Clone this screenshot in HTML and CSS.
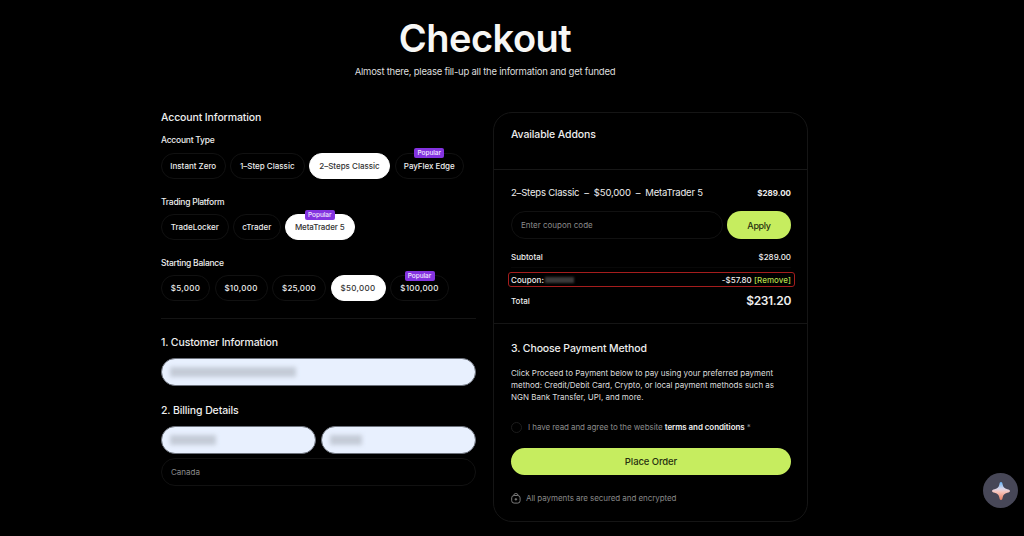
FILE: index.html
```
<!DOCTYPE html>
<html lang="en">
<head>
    <meta charset="UTF-8">
    <meta name="viewport" content="width=device-width, initial-scale=1.0">
    <title>Checkout</title>
    <link rel="stylesheet" href="styles.css">
</head>
<body>

    <header>
        <h1>Checkout</h1>
        <p>Almost there, please fill-up all the information and get funded</p>
    </header>

    <main class="checkout">
        <section class="details">
            <h2 class="account-title">Account Information</h2>

            <h3>Account Type</h3>
            <div class="options">
                <button class="pill w-instant">Instant Zero</button>
                <button class="pill w-one">1–Step Classic</button>
                <button class="pill w-two active">2–Steps Classic</button>
                <button class="pill w-edge">PayFlex Edge<span class="badge">Popular</span></button>
            </div>

            <h3>Trading Platform</h3>
            <div class="options">
                <button class="pill w-locker">TradeLocker</button>
                <button class="pill w-ctrader">cTrader</button>
                <button class="pill w-meta active">MetaTrader 5<span class="badge">Popular</span></button>
            </div>

            <h3>Starting Balance</h3>
            <div class="options balance">
                <button class="pill w-5k">$5,000</button>
                <button class="pill w-10k">$10,000</button>
                <button class="pill w-25k">$25,000</button>
                <button class="pill w-50k active">$50,000</button>
                <button class="pill w-100k">$100,000<span class="badge">Popular</span></button>
            </div>

            <h2 class="customer-title">1. Customer Information</h2>
            <div class="field filled"><span class="hidden-value email"></span></div>

            <h2 class="billing-title">2. Billing Details</h2>
            <div class="field-row">
                <div class="field filled"><span class="hidden-value first-name"></span></div>
                <div class="field filled"><span class="hidden-value last-name"></span></div>
            </div>
            <div class="field country">Canada</div>
        </section>

        <section class="summary">
            <div class="addons">
                <h2>Available Addons</h2>
            </div>

            <div class="order">
                <div class="line product">
                    <span class="product-name">2–Steps Classic &nbsp;–&nbsp; $50,000 &nbsp;–&nbsp; MetaTrader 5</span>
                    <strong>$289.00</strong>
                </div>
                <div class="coupon-form">
                    <div class="field coupon-input">Enter coupon code</div>
                    <button class="apply">Apply</button>
                </div>
                <div class="line subtotal">
                    <span>Subtotal</span>
                    <span>$289.00</span>
                </div>
                <div class="line coupon">
                    <span class="coupon-label">Coupon:<span class="hidden-code"></span></span>
                    <span>-$57.80 <a class="remove">[Remove]</a></span>
                </div>
                <div class="line total">
                    <span>Total</span>
                    <span class="amount">$231.20</span>
                </div>
            </div>

            <div class="payment">
                <h2>3. Choose Payment Method</h2>
                <p class="info">Click Proceed to Payment below to pay using your preferred payment<br>method: Credit/Debit Card, Crypto, or local payment methods such as<br>NGN Bank Transfer, UPI, and more.</p>
                <div class="terms">
                    <span class="check"></span>
                    <span>I have read and agree to the website <b>terms and conditions</b> *</span>
                </div>
                <button class="place-order">Place Order</button>
                <div class="secure">
                    <svg width="10" height="11" viewBox="0 0 10 11" fill="none" stroke="currentColor" stroke-width="0.9">
                        <rect x="0.7" y="2.5" width="8.4" height="7.6" rx="2.4"/>
                        <path d="M2.8 2.5V2.2a2.1 1.7 0 0 1 4.2 0v.3"/>
                        <path d="M4.9 5v2.6M3.6 6.3h2.6"/>
                    </svg>
                    <span>All payments are secured and encrypted</span>
                </div>
            </div>
        </section>
    </main>

    <button class="assistant" aria-label="Assistant">
        <svg width="20" height="20" viewBox="0 0 20 20">
            <defs>
                <linearGradient id="spark" x1="0" y1="0" x2="0" y2="1">
                    <stop offset="0" stop-color="#68b4f5"/>
                    <stop offset="0.38" stop-color="#dcd6e8"/>
                    <stop offset="0.55" stop-color="#f7c5bd"/>
                    <stop offset="1" stop-color="#e87e60"/>
                </linearGradient>
            </defs>
            <path fill="url(#spark)" d="M10 1c1 0 1.3.7 1.6 2.2.6 3 1.7 4.3 4.8 5C18.2 8.6 19 9.1 19 10s-.8 1.4-2.6 1.8c-3.1.7-4.2 2-4.8 5C11.3 18.3 11 19 10 19s-1.3-.7-1.6-2.2c-.6-3-1.7-4.3-4.8-5C1.8 11.400 1 10.9 1 10s.8-1.4 2.6-1.8c3.1-.7 4.2-2 4.8-5C8.7 1.7 9 1 10 1z"/>
        </svg>
    </button>

</body>
</html>
```
FILE: styles.css
```
* {
    box-sizing: border-box;
}
body {
    margin: 0;
    height: 536px;
    overflow: hidden;
    background-color: #000;
    color: #eee;
    font-family: 'Inter', sans-serif;
    font-size: 8px;
}
h1, h2, h3, p {
    margin: 0;
}
button {
    border: 0;
    padding: 0;
    font-family: inherit;
}
header {
    width: 970px;
    height: 112px;
    padding-top: 15px;
    text-align: center;
}
h1 {
    font-size: 38px;
    line-height: 46px;
    font-weight: 600;
    color: #f7f7f5;
    letter-spacing: -0.5px;
}
header p {
    margin-top: 4px;
    font-size: 9.5px;
    line-height: 13px;
    letter-spacing: -0.23px;
    color: #ddd;
}
h2 {
    font-size: 10.5px;
    line-height: 14px;
    font-weight: 500;
    letter-spacing: -0.12px;
}
h3 {
    font-size: 8.5px;
    line-height: 12px;
    font-weight: 500;
    letter-spacing: -0.25px;
}
.checkout {
    display: flex;
    gap: 17px;
    width: 647px;
    margin-left: 161px;
}

/* Left column */
.details {
    width: 315px;
}
.account-title {
    margin-top: -1.5px;
    margin-bottom: 9.5px;
}
.options {
    display: flex;
    gap: 4.5px;
    height: 26px;
    margin: 6.5px 0 17px;
}
.pill {
    position: relative;
    height: 26px;
    border: 1px solid #111;
    border-radius: 13px;
    background-color: #000;
    color: #eee;
    font-size: 8px;
    font-weight: 500;
    white-space: nowrap;
}
.pill.active {
    background-color: #fff;
    border-color: #fff;
    color: #333;
}
.w-instant { width: 64.5px; }
.w-one { width: 74.5px; }
.w-two { width: 81px; }
.w-edge { width: 69.5px; letter-spacing: -0.05px; }
.w-locker { width: 67.5px; }
.w-ctrader { width: 47.5px; }
.w-meta { width: 69.5px; letter-spacing: -0.1px; }
.w-5k { width: 49px; letter-spacing: 0.3px; }
.w-10k { width: 53px; letter-spacing: 0.3px; }
.w-25k { width: 54px; letter-spacing: 0.2px; }
.w-50k { width: 55px; letter-spacing: 0.3px; }
.w-100k { width: 59px; letter-spacing: 0.25px; }
.badge {
    position: absolute;
    top: -5.5px;
    left: 50%;
    width: 30px;
    margin-left: -15px;
    border-radius: 2px;
    background-color: #8433e0;
    color: #f3eaff;
    font-size: 6.5px;
    line-height: 10px;
    letter-spacing: -0.05px;
}
.options.balance {
    height: 43.5px;
    margin-bottom: 0;
    border-bottom: 1px solid #141414;
}
.balance .pill {
    margin-top: -0.5px;
}
.customer-title {
    margin-top: 17px;
}
.field {
    display: flex;
    align-items: center;
    height: 28px;
    padding-left: 9px;
    border: 1px solid #111;
    border-radius: 14px;
    color: #8b8b8b;
}
.field.filled {
    margin-top: 8px;
    border-color: #6d727c;
    background-color: #e8f0fe;
}
.billing-title {
    margin-top: 17.5px;
}
.field-row {
    display: flex;
    gap: 5px;
}
.field-row .field {
    flex: 1;
}
.hidden-value {
    height: 10px;
    margin-left: -1px;
    background-color: #c4cbd7;
    filter: blur(2px);
}
.email { width: 126px; }
.first-name { width: 46px; }
.last-name { width: 32px; }
.country {
    margin-top: 4.5px;
}

/* Order summary */
.summary {
    width: 315px;
    height: 410px;
    border: 1px solid #151515;
    border-radius: 19px;
}
.addons {
    height: 57px;
    padding: 15px 17px 0;
    border-bottom: 1px solid #171717;
}
.order {
    height: 154px;
    padding: 15px 16px 0 17px;
    border-bottom: 1px solid #151515;
}
.line {
    display: flex;
    align-items: center;
    justify-content: space-between;
    font-weight: 500;
}
.product {
    height: 15px;
}
.product-name {
    font-size: 9.5px;
    font-weight: 400;
    letter-spacing: -0.18px;
}
.coupon-form {
    display: flex;
    gap: 4px;
    margin-top: 11px;
}
.coupon-input {
    width: 212px;
}
.apply {
    width: 64px;
    height: 28px;
    border-radius: 14px;
    background-color: #c6ed5f;
    color: #26300f;
    font-size: 9px;
    font-weight: 500;
    letter-spacing: -0.35px;
}
.subtotal {
    height: 29px;
    padding-top: 7px;
    border-bottom: 1px solid #080808;
}
.coupon {
    height: 15px;
    margin: 4px -4px 0 -3px;
    padding: 0 3px 0 2px;
    border: 1px solid #a51d1d;
    border-radius: 3px;
    letter-spacing: 0.05px;
}
.coupon-label {
    display: flex;
    align-items: center;
}
.hidden-code {
    width: 29px;
    height: 6px;
    margin-left: 1px;
    background-color: #3a3a3a;
    filter: blur(1px);
}
.remove {
    color: #b5dd4b;
}
.total {
    height: 24px;
    margin-top: 1.5px;
}
.amount {
    font-size: 12px;
    font-weight: 600;
    letter-spacing: -0.35px;
}
.payment {
    padding: 18px 17px 0;
}
.info {
    margin-top: 11px;
    font-size: 8px;
    line-height: 12px;
    white-space: nowrap;
    letter-spacing: -0.01px;
    color: #ddd;
}
.terms {
    display: flex;
    align-items: center;
    gap: 6px;
    height: 12px;
    margin-top: 18px;
    color: #8b8b8b;
    letter-spacing: -0.08px;
    white-space: nowrap;
}
.terms b {
    color: #eee;
    font-weight: 600;
}
.check {
    width: 11px;
    height: 11px;
    border: 1px solid #1c1c1c;
    border-radius: 50%;
}
.place-order {
    display: block;
    width: 280px;
    height: 27px;
    margin-top: 15px;
    border-radius: 14px;
    background-color: #c6ed5f;
    color: #26300f;
    font-size: 9.5px;
    font-weight: 500;
    letter-spacing: -0.1px;
}
.secure {
    display: flex;
    align-items: center;
    gap: 5px;
    height: 12px;
    margin-top: 17px;
    letter-spacing: -0.07px;
    color: #888;
}

/* Floating assistant button */
.assistant {
    position: fixed;
    right: 6px;
    bottom: 28px;
    display: flex;
    align-items: center;
    justify-content: center;
    width: 35px;
    height: 35px;
    border-radius: 50%;
    background-color: #474757;
}
```
